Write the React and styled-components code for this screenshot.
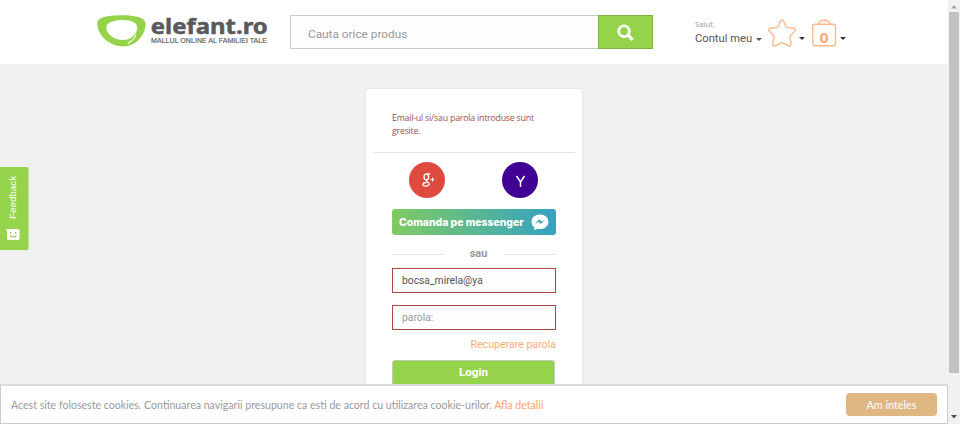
import React from 'react';
import styled, { createGlobalStyle } from 'styled-components';

const GlobalStyle = createGlobalStyle`
  * { box-sizing: border-box; }
  body { margin: 0; overflow: hidden; background: #f1f1f1; }
  input, button { font: inherit; border-radius: 0; outline: none; }
`;

const Window = styled.div`
  display: flex;
  width: 960px;
  height: 424px;
  overflow: hidden;
  font-family: Lato, sans-serif;
  color: #555;
`;

const Page = styled.div`
  position: relative;
  width: 948px;
  height: 424px;
  overflow: hidden;
  background: #f1f1f1;
`;

const Header = styled.header`
  display: flex;
  align-items: flex-start;
  height: 65px;
  padding: 15px 0 0 96px;
  background: #fff;
  border-bottom: 1px solid #f0f0f0;
`;

const LogoLink = styled.div`
  width: 176px;
  height: 34px;
  margin-right: 18px;
  svg { display: block; overflow: visible; }
`;

const Search = styled.form`
  display: flex;
  width: 363px;
  height: 34px;
`;

const SearchInput = styled.input`
  width: 308px;
  height: 34px;
  padding: 3px 16px 0 17px;
  border: 1px solid #ccc;
  border-right: 0;
  background: #fdfdfd;
  font-family: Roboto, sans-serif;
  font-size: 11.8px;
  color: #888;
  &::placeholder { color: #999; opacity: 1; }
`;

const SearchButton = styled.button`
  display: flex;
  align-items: center;
  justify-content: center;
  width: 55px;
  height: 34px;
  padding: 0;
  border: 1px solid #7fb53f;
  background: #95d44a;
`;

const Account = styled.div`
  display: flex;
  flex-direction: column;
  width: 58px;
  margin: 4px 0 0 42px;
  white-space: nowrap;
`;

const Greeting = styled.span`
  font-family: "Open Sans", sans-serif;
  font-size: 7.8px;
  line-height: 10px;
  color: #999;
`;

const AccountName = styled.span`
  font-family: Roboto, sans-serif;
  font-size: 11.2px;
  line-height: 19px;
  color: #555;
`;

const Caret = styled.span`
  width: 0;
  height: 0;
  margin: ${p => p.$top}px ${p => p.$gap}px 0 ${p => p.$before}px;
  border: 3px solid transparent;
  border-top-color: ${p => p.$color};
  border-bottom: 0;
`;

const HeaderIcon = styled.div`
  width: ${p => p.$width}px;
  height: 30px;
  margin-top: 3px;
  svg { display: block; }
`;

const Card = styled.main`
  width: 216px;
  height: 340px;
  margin: 24px 0 0 366px;
  padding-top: 23px;
  border-radius: 3px;
  background: #fff;
  box-shadow: 0 0 2px rgba(0, 0, 0, 0.14);
`;

const ErrorText = styled.p`
  height: 40px;
  margin: 0 26px;
  font-family: "Open Sans", sans-serif;
  font-size: 8.8px;
  letter-spacing: -0.22px;
  line-height: 12.5px;
  white-space: nowrap;
  color: #a0504c;
`;

const Divider = styled.hr`
  height: 1px;
  margin: 0 7px;
  border: 0;
  background: #e2e2e2;
`;

const SocialRow = styled.div`
  display: flex;
  gap: 57px;
  margin: 9px 0 11px 43px;
  height: 36px;
`;

const SocialButton = styled.div`
  display: flex;
  width: 36px;
  height: 36px;
  border-radius: 50%;
  background: ${p => p.$color};
`;

const Messenger = styled.div`
  display: flex;
  align-items: center;
  width: 164px;
  height: 26px;
  margin-left: 26px;
  padding-left: 7px;
  border-radius: 3px;
  background: linear-gradient(90deg, #80ca62, #36a2c2);
  color: #fff;
`;

const MessengerLabel = styled.span`
  width: 132px;
  padding-top: 1px;
  font-family: Inter, sans-serif;
  font-size: 10.4px;
  font-weight: 800;
  white-space: nowrap;
`;

const Or = styled.div`
  display: grid;
  grid-template-columns: 52px 1fr 52px;
  align-items: center;
  height: 33px;
  width: 164px;
  margin-left: 26px;
  padding-top: 4px;
  text-align: center;
  font-family: Roboto, sans-serif;
  font-size: 11px;
  font-weight: 700;
  line-height: 14px;
  color: #999;
  &::before, &::after { content: ''; height: 1px; background: #e2e2e2; margin-top: 1px; }
`;

const OrLabel = styled.span`
  padding-left: 9px;
`;

const Field = styled.input`
  display: block;
  width: 164px;
  height: 25px;
  margin: 0 0 12px 26px;
  padding: 0 9px;
  border: 1px solid #ad4747;
  background: #fdfdfd;
  font-family: Roboto, sans-serif;
  font-size: 10.3px;
  color: #555;
  &::placeholder { color: #999; opacity: 1; }
`;

const Recover = styled.div`
  width: 190px;
  height: 18px;
  text-align: right;
  font-family: Roboto, sans-serif;
  font-size: 10.6px;
  line-height: 5px;
  color: #ffab79;
`;

const Login = styled.button`
  display: block;
  width: 163px;
  height: 26px;
  margin-left: 26px;
  padding: 0 0 3px;
  border: 1px solid #c3c9bb;
  border-radius: 3px;
  background: #95d44a;
  font-family: Roboto, sans-serif;
  font-size: 11.7px;
  font-weight: 700;
  color: #fff;
`;

const Feedback = styled.aside`
  position: absolute;
  left: 0;
  top: 167px;
  display: flex;
  flex-direction: column;
  align-items: center;
  width: 29px;
  height: 83px;
  padding: 9px 2px 0 0;
  border-right: 1px solid #bce08e;
  border-radius: 0 2px 2px 0;
  background: #95d44a;
`;

const FeedbackLabel = styled.span`
  height: 43px;
  margin-bottom: 10px;
  writing-mode: vertical-rl;
  transform: rotate(180deg);
  font-family: "Liberation Sans", sans-serif;
  font-size: 9.8px;
  line-height: 14px;
  color: #fff;
`;

const CookieBar = styled.footer`
  position: absolute;
  left: 0;
  bottom: 0;
  display: flex;
  align-items: center;
  justify-content: space-between;
  width: 948px;
  height: 40px;
  padding: 0 10px;
  border: 1px solid #ccc;
  border-top: 2px solid #ddd;
  background: #fff;
`;

const CookieText = styled.span`
  font-size: 10.6px;
  white-space: nowrap;
  color: #999;
`;

const CookieLink = styled.span`
  color: #ffa06a;
`;

const Accept = styled.button`
  width: 91px;
  height: 23px;
  padding: 0;
  border: 0;
  border-radius: 4px;
  background: #deb782;
  font-family: Lato, sans-serif;
  font-size: 10.8px;
  color: #fff;
`;

const Scrollbar = styled.div`
  display: flex;
  flex-direction: column;
  align-items: center;
  justify-content: space-between;
  width: 12px;
  height: 424px;
  padding: 5px 0;
  background: #f1f1f1;
`;

const ScrollThumb = styled.div`
  width: 10px;
  height: 361px;
  margin: 3px 0 auto;
  background: #c1c1c1;
`;

const Logo = () => (
  <svg width="176" height="34" viewBox="0 0 176 34">
    <path fill="#95d44a" d="M1.300 8C1.300 4 6 2 12 1.200 20 0 32-.3 40 1.400c7 1.400 10.300 4.200 9.600 9-.4 3.700-1.700 7.400-4.100 10.900C41 28.200 34.500 31.400 27 31.400 14 31.400 1.100 20.800 1.300 8Z" />
    <path fill="#fff" d="M10.300 13C9.700 7.500 18 4.800 27 4.900 36 5 42 8 41.300 13.500 40.700 17.500 38.500 20.500 35.500 22.500 33 24.300 30 25 26.500 25 18.500 25 11 19.500 10.300 13Z" />
    <path d="M32 29C32 26.500 38.500 26 39.700 20" fill="none" stroke="#fff" strokeWidth="1.200" />
    <text x="54.800" y="19.300" textLength="117" lengthAdjust="spacingAndGlyphs" fontFamily="Noto Sans" fontWeight="700" fontSize="21" fill="#595a5c" stroke="#595a5c" strokeWidth=".5">elefant.ro</text>
    <text x="55" y="27.800" textLength="116" lengthAdjust="spacingAndGlyphs" fontFamily="Liberation Sans" fontSize="6.900" fill="#595a5c" stroke="#595a5c" strokeWidth=".15">MALLUL ONLINE AL FAMILIEI TALE</text>
  </svg>
);

const SearchIcon = () => (
  <svg width="17" height="17" viewBox="0 0 17 17" fill="none" stroke="#fff">
    <circle cx="7" cy="7.200" r="5.300" strokeWidth="2.800" />
    <path d="m11 11.200 4.700 4.700" strokeWidth="3.200" />
  </svg>
);

const StarIcon = () => (
  <svg width="30" height="30" viewBox="0 0 30 30">
    <path d="M13.400 3.200Q15 .4 16.600 3.200L19 8.500Q19.400 9.400 20.500 9.600L26.500 10.300Q29.800 11 27.400 13.600L23.500 17.800Q22.700 18.700 23 19.900L24.100 25.500Q24.200 28.900 21 27.500L16.200 25.100Q15 24.500 13.800 25.100L9 27.500Q5.800 28.900 5.900 25.500L7 19.900Q7.300 18.700 6.500 17.800L2.600 13.600Q.2 11 3.500 10.300L9.500 9.600Q10.600 9.400 11 8.500Z" fill="none" stroke="#ffb88d" strokeWidth="1.400" />
  </svg>
);

const BagIcon = () => (
  <svg width="26" height="30" viewBox="0 0 26 30">
    <path d="M6.500 6C8 .9 16.500 .9 18 6" fill="none" stroke="#ffb88d" strokeWidth="1.400" />
    <rect x=".7" y="6.300" width="22.800" height="21.500" rx="2.500" fill="none" stroke="#ffb88d" strokeWidth="1.400" />
    <text x="12.200" y="24.500" textAnchor="middle" fontFamily="Inter" fontWeight="700" fontSize="13" fill="#ff9d66">0</text>
  </svg>
);

const GoogleIcon = () => (
  <svg width="36" height="36" viewBox="0 0 36 36" fill="none" stroke="#fff">
    <ellipse cx="17.300" cy="15" rx="2.300" ry="2.900" strokeWidth="1.300" />
    <path d="M21 12h-3.500M18.500 17.500c-2 1.400-1 1.900.5 2.800 3 2-.2 4-2.500 3.900-4-.1-3.200-3.700 1-3.700" strokeWidth="1.300" />
    <path d="M21.500 17.500h4M23.500 15.500v4" strokeWidth="1" />
  </svg>
);

const YahooIcon = () => (
  <svg width="36" height="36" viewBox="0 0 36 36">
    <path d="m14.500 14 4 6 4-6M18.500 20v5" fill="none" stroke="#fff" strokeWidth="1.500" />
  </svg>
);

const MessengerIcon = () => (
  <svg width="18" height="17" viewBox="0 0 18 17">
    <path d="M9 .5C4.200.5.600 3.600.600 7.700c0 2.300 1 4.200 2.700 5.500v3l2.800-1.500c.9.300 1.900.4 2.900.4 4.800 0 8.400-3.200 8.400-7.400S13.800.5 9 .5Z" fill="#fff" />
    <path d="m3.900 9.900 4.300-4.600 2.400 2.300 3.700-2-4.400 4.500-2.300-2.200Z" fill="#45a8b2" />
  </svg>
);

const FaceIcon = () => (
  <svg width="14" height="12" viewBox="0 0 14 12">
    <path d="M0 0h12a1.500 1.500 0 0 1 1.500 1.500v8A1.500 1.500 0 0 1 12 11H2.500A1.500 1.500 0 0 1 1 9.500V2Z" fill="#fff" />
    <path d="M4.500 3v1.600M9.800 3v1.600M4 6.500c1.200 2 5.200 2 6.500 0" fill="none" stroke="#82bf3e" strokeWidth="1.200" />
  </svg>
);

const ScrollArrow = ({ up }) => (
  <svg width="6" height="4" viewBox="0 0 6 4">
    <path d={up ? 'M0 3.500 3 0l3 3.500Z' : 'M0 0h6L3 3.500Z'} fill={up ? '#a3a3a3' : '#505050'} />
  </svg>
);

export default function App() {
  return (
    <Window>
      <GlobalStyle />
      <Page>
        <Header>
          <LogoLink><Logo /></LogoLink>
          <Search>
            <SearchInput placeholder="Cauta orice produs" />
            <SearchButton type="button" aria-label="Cauta"><SearchIcon /></SearchButton>
          </Search>
          <Account>
            <Greeting>Salut,</Greeting>
            <AccountName>Contul meu</AccountName>
          </Account>
          <Caret $top={23} $gap={5} $before={3} $color="#555" />
          <HeaderIcon $width={32}><StarIcon /></HeaderIcon>
          <Caret $top={22} $gap={7} $before={0} $color="#333" />
          <HeaderIcon $width={26}><BagIcon /></HeaderIcon>
          <Caret $top={22} $gap={0} $before={2} $color="#333" />
        </Header>
        <Card>
          <ErrorText>Email-ul si/sau parola introduse sunt<br />gresite.</ErrorText>
          <Divider />
          <SocialRow>
            <SocialButton $color="#de4b3e"><GoogleIcon /></SocialButton>
            <SocialButton $color="#410093"><YahooIcon /></SocialButton>
          </SocialRow>
          <Messenger>
            <MessengerLabel>Comanda pe messenger</MessengerLabel>
            <MessengerIcon />
          </Messenger>
          <Or><OrLabel>sau</OrLabel></Or>
          <Field defaultValue="bocsa_mirela@ya" />
          <Field placeholder="parola:" />
          <Recover>Recuperare parola</Recover>
          <Login type="button">Login</Login>
        </Card>
        <Feedback>
          <FeedbackLabel>Feedback</FeedbackLabel>
          <FaceIcon />
        </Feedback>
        <CookieBar>
          <CookieText>
            Acest site foloseste cookies. Continuarea navigarii presupune ca esti de acord cu utilizarea cookie-urilor. <CookieLink>Afla detalii</CookieLink>
          </CookieText>
          <Accept type="button">Am inteles</Accept>
        </CookieBar>
      </Page>
      <Scrollbar>
        <ScrollArrow up />
        <ScrollThumb />
        <ScrollArrow />
      </Scrollbar>
    </Window>
  );
}
